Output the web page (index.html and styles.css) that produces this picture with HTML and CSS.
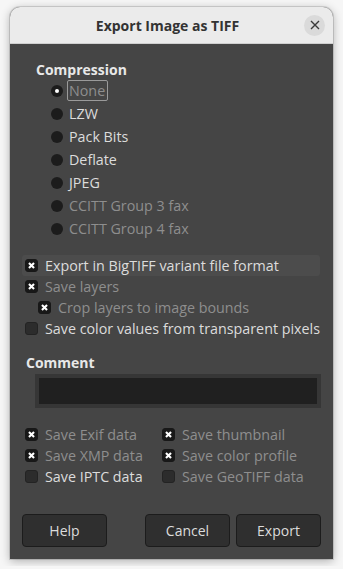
FILE: index.html
```html
<!DOCTYPE html>
<html>
<head>
  <title>Export Image as TIFF</title>
  <link rel="stylesheet" href="styles.css">
</head>
<body>
  <div class="window">
    <div class="titlebar">
      <span></span>
      <p class="title">Export Image as TIFF</p>
      <button class="close-btn">
        <svg width="10" height="10" viewBox="0 0 10 10"><path d="M1 1 L9 9 M9 1 L1 9" stroke="#3a3a3a" stroke-width="1.4" fill="none"/></svg>
      </button>
    </div>

    <div class="content">
      <div class="compression">
        <p class="frame-title">Compression</p>
        <div class="radio-list">
          <div class="radio-row disabled"><span class="radio selected"></span><span class="label focused">None</span></div>
          <div class="radio-row"><span class="radio"></span><span class="label">LZW</span></div>
          <div class="radio-row"><span class="radio"></span><span class="label">Pack Bits</span></div>
          <div class="radio-row"><span class="radio"></span><span class="label">Deflate</span></div>
          <div class="radio-row"><span class="radio"></span><span class="label">JPEG</span></div>
          <div class="radio-row disabled"><span class="radio"></span><span class="label">CCITT Group 3 fax</span></div>
          <div class="radio-row disabled"><span class="radio"></span><span class="label">CCITT Group 4 fax</span></div>
        </div>
      </div>

      <div class="options">
        <div class="check-row hover">
          <span class="check checked"><svg width="13" height="13" viewBox="0 0 13 13"><path d="M3.5 3.5 L9.5 9.5 M9.5 3.5 L3.5 9.5" stroke="#fff" stroke-width="2.5" fill="none"/></svg></span>
          <span class="label">Export in BigTIFF variant file format</span>
        </div>
        <div class="check-row disabled">
          <span class="check checked"><svg width="13" height="13" viewBox="0 0 13 13"><path d="M3.5 3.5 L9.5 9.5 M9.5 3.5 L3.5 9.5" stroke="#fff" stroke-width="2.5" fill="none"/></svg></span>
          <span class="label">Save layers</span>
        </div>
        <div class="check-row disabled indent">
          <span class="check checked"><svg width="13" height="13" viewBox="0 0 13 13"><path d="M3.5 3.5 L9.5 9.5 M9.5 3.5 L3.5 9.5" stroke="#fff" stroke-width="2.5" fill="none"/></svg></span>
          <span class="label">Crop layers to image bounds</span>
        </div>
        <div class="check-row">
          <span class="check"></span>
          <span class="label">Save color values from transparent pixels</span>
        </div>
      </div>

      <div class="comment">
        <p class="frame-title">Comment</p>
        <div class="comment-entry"><div class="comment-inner"></div></div>
      </div>

      <div class="meta-grid">
        <div class="check-row disabled">
          <span class="check checked"><svg width="13" height="13" viewBox="0 0 13 13"><path d="M3.5 3.5 L9.5 9.5 M9.5 3.5 L3.5 9.5" stroke="#fff" stroke-width="2.5" fill="none"/></svg></span>
          <span class="label">Save Exif data</span>
        </div>
        <div class="check-row disabled">
          <span class="check checked"><svg width="13" height="13" viewBox="0 0 13 13"><path d="M3.5 3.5 L9.5 9.5 M9.5 3.5 L3.5 9.5" stroke="#fff" stroke-width="2.5" fill="none"/></svg></span>
          <span class="label">Save thumbnail</span>
        </div>
        <div class="check-row disabled">
          <span class="check checked"><svg width="13" height="13" viewBox="0 0 13 13"><path d="M3.5 3.5 L9.5 9.5 M9.5 3.5 L3.5 9.5" stroke="#fff" stroke-width="2.5" fill="none"/></svg></span>
          <span class="label">Save XMP data</span>
        </div>
        <div class="check-row disabled">
          <span class="check checked"><svg width="13" height="13" viewBox="0 0 13 13"><path d="M3.5 3.5 L9.5 9.5 M9.5 3.5 L3.5 9.5" stroke="#fff" stroke-width="2.5" fill="none"/></svg></span>
          <span class="label">Save color profile</span>
        </div>
        <div class="check-row">
          <span class="check"></span>
          <span class="label">Save IPTC data</span>
        </div>
        <div class="check-row disabled">
          <span class="check"></span>
          <span class="label">Save GeoTIFF data</span>
        </div>
      </div>

      <div class="buttons">
        <button class="dialog-button">Help</button>
        <div class="spacer"></div>
        <button class="dialog-button">Cancel</button>
        <button class="dialog-button">Export</button>
      </div>
    </div>
  </div>
</body>
</html>
```

FILE: styles.css
```css
body {
  margin: 0;
  padding: 7px 10px;
  background-color: #f6f6f6;
  font-family: "Open Sans", "Noto Sans", sans-serif;
  font-size: 14.3px;
}

p {
  margin: 0;
}

.window {
  width: 323px;
  height: 552px;
  background-color: #454545;
  border-radius: 10px 10px 0 0;
  box-shadow: 0 2px 10px rgba(0, 0, 0, 0.3), 0 0 0 1px rgba(0, 0, 0, 0.12);
  display: flex;
  flex-direction: column;
  overflow: hidden;
}

.titlebar {
  height: 36px;
  background-color: #ebebeb;
  border-bottom: 1px solid #cfcfcf;
  display: grid;
  grid-template-columns: 1fr auto 1fr;
  align-items: center;
  padding-right: 8px;
}

.title {
  font-size: 14px;
  font-weight: bold;
  color: #333;
}

.close-btn {
  justify-self: end;
  width: 21px;
  height: 21px;
  border-radius: 50%;
  border: none;
  background-color: #dadada;
  padding: 0;
  display: flex;
  align-items: center;
  justify-content: center;
}

.content {
  flex: 1;
  padding: 17px 12px 12px 12px;
  display: flex;
  flex-direction: column;
}

.frame-title {
  font-size: 14px;
  font-weight: bold;
  color: #e8e8e8;
  line-height: 18px;
}

.compression .frame-title {
  padding-left: 14px;
}

.radio-list {
  padding-left: 29px;
}

.radio-row {
  height: 23px;
  display: flex;
  align-items: center;
  gap: 6px;
}

.radio {
  width: 12px;
  height: 12px;
  border-radius: 50%;
  background-color: #1c1c1c;
  display: flex;
  align-items: center;
  justify-content: center;
}

.radio.selected::after {
  content: "";
  width: 4px;
  height: 4px;
  border-radius: 50%;
  background-color: #fff;
}

.label {
  color: #dcdcdc;
  white-space: nowrap;
}

.disabled .label {
  color: #8e8e8e;
}

.label.focused {
  border: 1px solid #9a9a9a;
  border-radius: 2px;
  padding: 0 2px 0 1px;
  margin-left: -2px;
}

.options {
  margin-top: 15px;
}

.check-row {
  height: 21px;
  display: flex;
  align-items: center;
  gap: 7px;
  padding-left: 3px;
}

.check-row.hover {
  background-color: #4c4c4c;
  border-radius: 3px;
  margin-right: 1px;
}

.check-row.indent {
  padding-left: 16px;
}

.check {
  width: 13px;
  height: 13px;
  border-radius: 3px;
  background-color: #2c2c2c;
  border: 1px solid #232323;
  box-sizing: border-box;
  display: flex;
  align-items: center;
  justify-content: center;
}

.check.checked {
  background-color: #181818;
  border-color: #181818;
}

.comment {
  margin-top: 15px;
  padding-left: 4px;
}

.comment-entry {
  margin: 2px 0 0 9px;
  height: 34px;
  background-color: #363636;
  padding: 4px;
  box-sizing: border-box;
}

.comment-inner {
  height: 100%;
  background-color: #202020;
}

.meta-grid {
  margin-top: 16px;
  display: grid;
  grid-template-columns: 137px 1fr;
}

.buttons {
  margin-top: auto;
  display: flex;
  gap: 6px;
}

.spacer {
  flex: 1;
}

.dialog-button {
  width: 85px;
  height: 33px;
  background-color: #2f2f2f;
  border: 1px solid #1c1c1c;
  border-radius: 4px;
  color: #dcdcdc;
  font-family: "Open Sans", "Noto Sans", sans-serif;
  font-size: 14px;
}
```
